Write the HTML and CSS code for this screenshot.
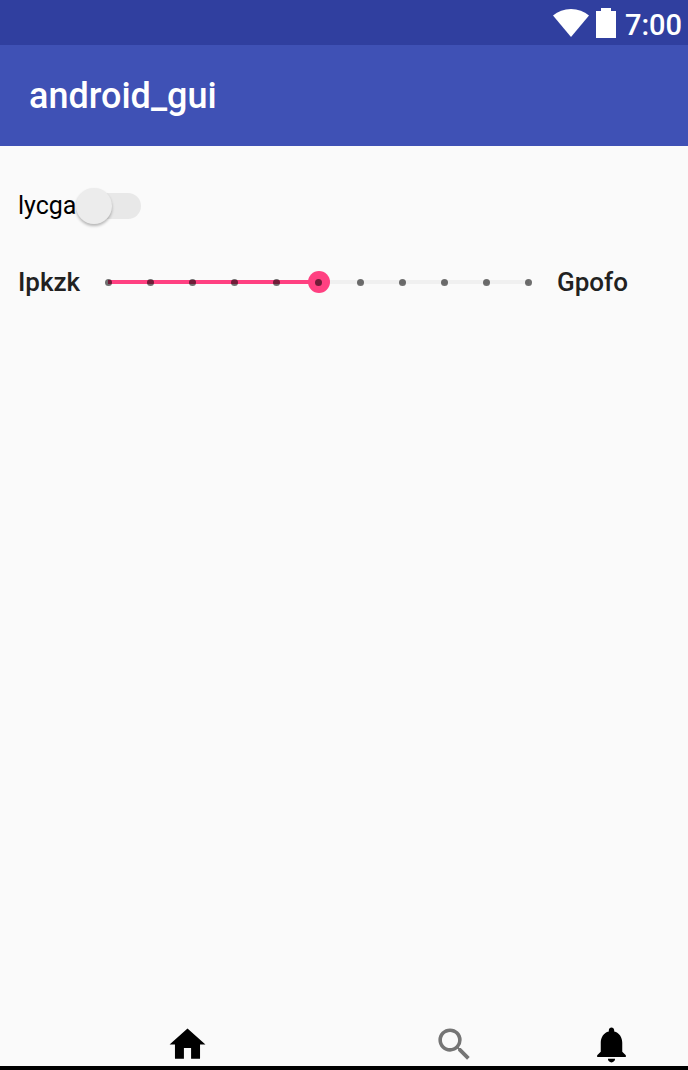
FILE: index.html
```
<!DOCTYPE html>
<html lang="en">
<head>
<meta charset="utf-8">
<meta name="viewport" content="width=device-width, initial-scale=1">
<title>android_gui</title>
<link rel="stylesheet" href="styles.css">
</head>
<body>
<div class="screen">
  <div class="status-bar">
    <svg class="status-wifi" viewBox="0 0 36 28" aria-hidden="true"><path d="M0 6.500C5 2.200 11 0 18 0s13 2.200 18 6.500L18 28z"/></svg>
    <svg class="status-battery" viewBox="0 0 20 30" aria-hidden="true"><path d="M5 0h10v3h5v27H0V3h5z"/></svg>
    <time class="status-time">7:00</time>
  </div>
  <header class="app-bar">
    <h1 class="app-title">android_gui</h1>
  </header>
  <main class="content">
    <label class="switch-row">
      <span>lycga</span>
      <input class="switch" type="checkbox" role="switch">
    </label>
    <div class="slider-row">
      <label class="slider-label" for="level">Ipkzk</label>
      <div class="slider-box">
        <input class="slider" id="level" type="range" min="0" max="10" value="5">
        <div class="ticks" aria-hidden="true"><i></i><i></i><i></i><i></i><i></i><i></i><i></i><i></i><i></i><i></i><i></i></div>
      </div>
      <span class="slider-label">Gpofo</span>
    </div>
  </main>
  <nav class="bottom-nav">
    <button class="nav-item" type="button" aria-label="Home"><svg class="nav-icon" viewBox="0 0 24 24"><path d="M10 20v-6h4v6h5v-8h3L12 3 2 12h3v8z"/></svg></button>
    <button class="nav-item nav-item-muted" type="button" aria-label="Search"><svg class="nav-icon" viewBox="0 0 24 24"><path d="M15.500 14h-.79l-.28-.27A6.471 6.471 0 0 0 16 9.500 6.500 6.500 0 1 0 9.500 16c1.610 0 3.090-.59 4.230-1.570l.27.28v.79l5 4.990L20.490 19l-4.990-5zm-6 0C7.010 14 5 11.990 5 9.500S7.010 5 9.500 5 14 7.010 14 9.500 11.990 14 9.500 14z"/></svg></button>
    <button class="nav-item" type="button" aria-label="Notifications"><svg class="nav-icon" viewBox="0 0 24 24"><path d="M12 22c1.100 0 2-.9 2-2h-4c0 1.100.89 2 2 2zm6-6v-5c0-3.070-1.640-5.640-4.500-6.320V4c0-.83-.67-1.500-1.500-1.500s-1.500.67-1.500 1.500v.68C7.630 5.360 6 7.920 6 11v5l-2 2v1h16v-1l-2-2z"/></svg></button>
  </nav>
</div>
</body>
</html>
```

FILE: styles.css
```
* {
  box-sizing: border-box;
}

body {
  margin: 0;
  background: #fafafa;
  color: #000;
  font-family: Roboto, "Liberation Sans", sans-serif;
}

.screen {
  display: flex;
  flex-direction: column;
  min-height: 100vh;
}

.status-bar {
  display: flex;
  align-items: center;
  justify-content: flex-end;
  height: 45px;
  padding-right: 6px;
  background: #303f9f;
  color: #fff;
}

.status-wifi {
  width: 36px;
  height: 28px;
  margin-right: 7px;
  fill: #fff;
}

.status-battery {
  width: 20px;
  height: 30px;
  margin-right: 9px;
  fill: #fff;
}

.status-time {
  padding-top: 4px;
  font-size: 29px;
  font-weight: 500;
  line-height: 34px;
}

.app-bar {
  display: flex;
  align-items: center;
  height: 101px;
  padding: 0 29px;
  background: #3f51b5;
  color: #fff;
}

.app-title {
  margin: 0;
  font-size: 36px;
  font-weight: 500;
  line-height: 44px;
}

.content {
  display: flex;
  flex: 1;
  flex-direction: column;
  align-items: stretch;
  gap: 34px;
  padding: 38px 60px 0 18px;
}

.switch-row {
  display: flex;
  align-items: center;
  align-self: flex-start;
  height: 44px;
  font-size: 25px;
  line-height: 30px;
}

.switch {
  display: flex;
  align-items: center;
  appearance: none;
  width: 65px;
  height: 26px;
  margin: 0;
  border-radius: 13px;
  background: linear-gradient(#e8e8e8, #e8e8e8) right / 47px 26px no-repeat;
}

.switch::before {
  content: "";
  flex: none;
  width: 36px;
  height: 36px;
  border-radius: 50%;
  background: #ececec;
  box-shadow: 0 2px 3px rgba(0, 0, 0, 0.28);
}

.switch:checked::before {
  margin-left: auto;
  background: #ff4081;
}

.slider-row {
  display: flex;
  align-items: center;
  gap: 17px;
}

.slider-label {
  color: #212121;
  font-size: 26px;
  font-weight: 500;
  line-height: 40px;
}

.slider-box {
  display: grid;
  flex: 1;
  align-items: center;
}

.slider,
.ticks {
  grid-area: 1 / 1;
}

.slider {
  appearance: none;
  width: 100%;
  height: 22px;
  margin: 0;
  background: linear-gradient(to right, transparent 11px, #ff4081 11px 50%, #f0f0f0 50% calc(100% - 11px), transparent calc(100% - 11px)) center / 100% 4px no-repeat;
}

.slider::-webkit-slider-thumb {
  appearance: none;
  width: 22px;
  height: 22px;
  border-radius: 50%;
  background: #ff4081;
}

.ticks {
  z-index: 1;
  display: flex;
  justify-content: space-between;
  padding: 0 8px;
  pointer-events: none;
}

.ticks i {
  width: 7px;
  height: 7px;
  border-radius: 50%;
  background: rgba(0, 0, 0, 0.56);
}

.bottom-nav {
  display: grid;
  grid-template-columns: 1fr 160px 154px;
  border-bottom: 4px solid #000;
}

.nav-item {
  display: flex;
  justify-content: center;
  padding: 0;
  border: 0;
  background: none;
  color: #000;
}

.nav-item-muted {
  color: #757575;
}

.nav-icon {
  width: 43px;
  height: 43px;
  fill: currentColor;
}
```
